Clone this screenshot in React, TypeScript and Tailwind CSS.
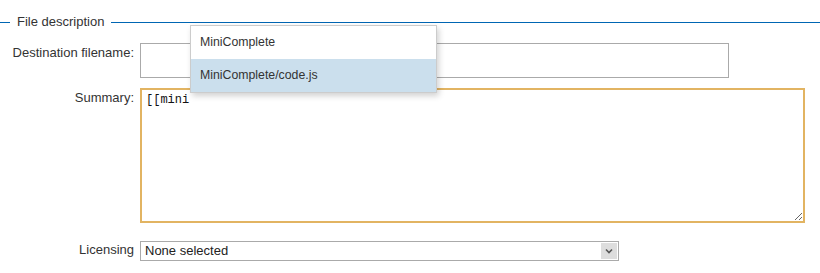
import React from 'react';

const App = () => {
  return (
    <div className="relative w-[820px] h-[273px] bg-white text-[13px] text-[#333] font-['Liberation_Sans',Arial,sans-serif]">
      {/* Legend line */}
      <div className="flex items-center pt-[14px] h-[30px]">
        <div className="w-[10px] h-px bg-[#0066b3] mt-px" />
        <span className="px-[7px] leading-[16px] text-[#333]">File description</span>
        <div className="flex-1 h-px bg-[#0066b3] mt-px" />
      </div>

      {/* Rows */}
      <div className="grid grid-cols-[134px_1fr] gap-x-[6px]">
        <label className="text-right pt-[15px] leading-[15px]">Destination filename:</label>
        <div className="pt-[13px]">
          <input className="w-[589px] h-[35px] border border-[#aaa] outline-none bg-white" />
        </div>

        <label className="text-right pt-[12px] leading-[15px]">Summary:</label>
        <div className="pt-[10px]">
          <textarea
            defaultValue="[[mini"
            className="block w-[665px] h-[135px] border-2 border-[#e2b462] px-[4px] py-[3px] font-['Liberation_Mono',monospace] text-[12px] leading-[15px] text-[#111] outline-none resize bg-white"
          />
        </div>

        <label className="text-right pt-[19px] leading-[15px]">Licensing</label>
        <div className="pt-[18px]">
          <div className="flex w-[479px] h-[20px] border border-[#aaa] bg-white">
            <span className="flex-1 pl-[4px] leading-[18px] text-[#222]">None selected</span>
            <span className="w-[16px] h-[16px] m-px bg-[#ddd] flex items-center justify-center">
              <svg width="8" height="6" viewBox="0 0 8 6">
                <path d="M1 1.5 L4 4.5 L7 1.5" stroke="#555" strokeWidth="1.6" fill="none" />
              </svg>
            </span>
          </div>
        </div>
      </div>

      {/* Autocomplete popup */}
      <div className="absolute left-[190px] top-[25px] w-[247px] text-[12.3px] border border-[#ccc] bg-white shadow-[2px_3px_6px_rgba(0,0,0,0.18)]">
        <div className="h-[33px] flex items-center pl-[9px] text-[#333]">MiniComplete</div>
        <div className="h-[33px] flex items-center pl-[9px] bg-[#cbdfed] text-[#333]">MiniComplete/code.js</div>
      </div>
    </div>
  );
};

export default App;
